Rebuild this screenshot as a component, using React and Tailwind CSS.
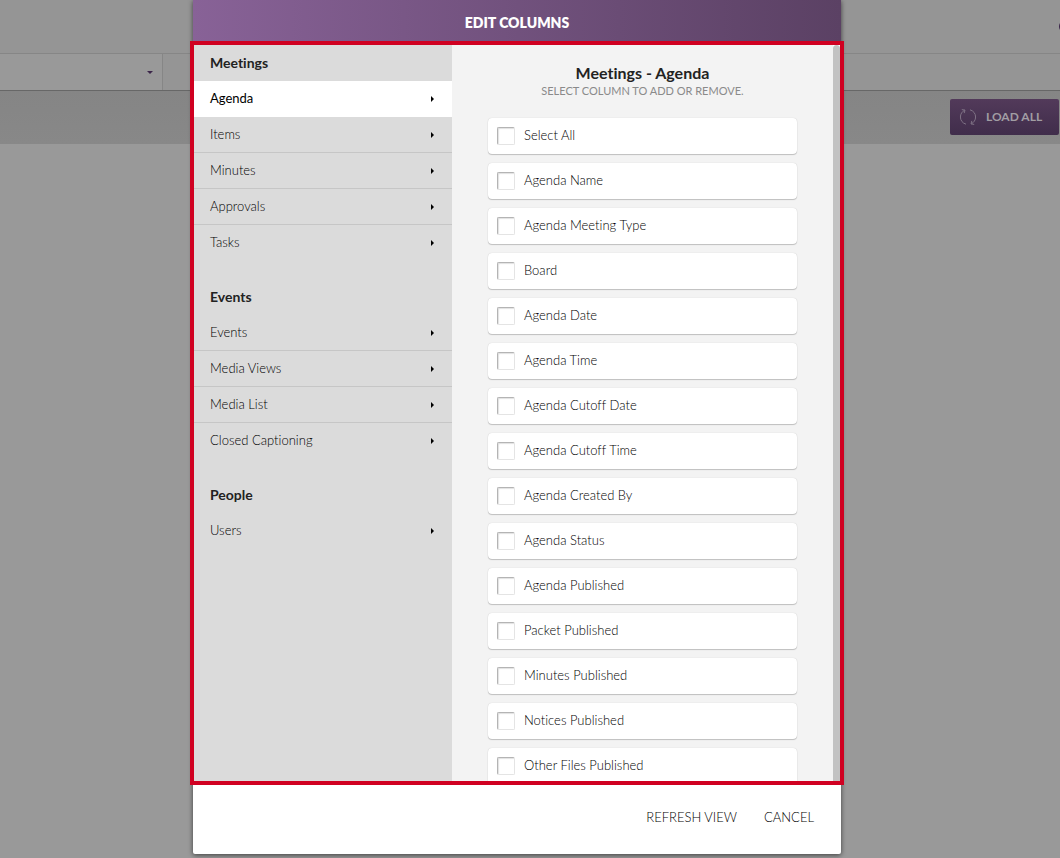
import React, { useState } from 'react';

const sections = [
  { title: 'Meetings', items: ['Agenda', 'Items', 'Minutes', 'Approvals', 'Tasks'] },
  { title: 'Events', items: ['Events', 'Media Views', 'Media List', 'Closed Captioning'] },
  { title: 'People', items: ['Users'] },
];

const columns = [
  'Select All',
  'Agenda Name',
  'Agenda Meeting Type',
  'Board',
  'Agenda Date',
  'Agenda Time',
  'Agenda Cutoff Date',
  'Agenda Cutoff Time',
  'Agenda Created By',
  'Agenda Status',
  'Agenda Published',
  'Packet Published',
  'Minutes Published',
  'Notices Published',
  'Other Files Published',
];

function ReloadIcon() {
  return (
    <svg width="18" height="18" viewBox="0 0 18 18" fill="none" stroke="currentColor" strokeWidth="1" aria-hidden="true">
      <path d="M7 16.2C3.5 15.2 1.4 12.3 1.4 9c0-3 1.700-5.500 4.300-6.800" />
      <path d="M2.800 1.600l3.200.5-.8 3" />
      <path d="M11 1.800C14.500 2.800 16.600 5.700 16.600 9c0 3-1.700 5.500-4.300 6.800" />
      <path d="M15.200 16.400l-3.200-.5.800-3" />
    </svg>
  );
}

function Backdrop() {
  return (
    <div className="min-h-screen bg-[#999999] overflow-hidden">
      <div className="flex h-[54px] items-center justify-end border-b border-[#868686] bg-[#959595]">
        <span className="-mr-3 size-[13px] rounded-full bg-[#3b2549]" />
      </div>
      <div className="flex h-[37px] border-b border-[#676767] bg-[#959595]">
        <button type="button" aria-label="Views" className="flex w-[163px] items-center justify-end border-r border-[#868686] bg-[#999999] pr-[9px]">
          <svg width="6" height="3" viewBox="0 0 6 3" aria-hidden="true">
            <path d="M0 0h6L3 3z" fill="#3b2549" />
          </svg>
        </button>
      </div>
      <div className="flex h-[53px] items-center justify-end bg-linear-to-b from-[#858585] to-[#888888] pr-px pb-px">
        <button
          type="button"
          className="flex h-9 w-[109px] items-center gap-[9px] rounded-xs bg-linear-to-b from-[#523a5a] to-[#402d4b] pl-[9px] text-xs font-bold text-[#a19da3]"
        >
          <span className="text-[#7f7285]"><ReloadIcon /></span>
          LOAD ALL
        </button>
      </div>
    </div>
  );
}

function Sidebar({ active, onSelect }) {
  return (
    <nav className="flex w-[258px] shrink-0 flex-col gap-[18px] bg-[#dbdbdb]">
      {sections.map((section) => (
        <div key={section.title}>
          <h3 className="flex h-9 items-center px-4 text-sm font-bold text-[#222222]">{section.title}</h3>
          <ul>
            {section.items.map((item) => {
              const id = `${section.title} - ${item}`;
              const isActive = active === id;
              return (
                <li key={id} className="group h-9">
                  <button
                    type="button"
                    onClick={() => onSelect(id)}
                    className={`flex h-full w-full items-center justify-between border-b pl-4 pr-[18px] text-left text-[13px] text-black group-last:border-transparent ${isActive ? 'border-white bg-white' : 'border-[#c6c6c6] font-light'}`}
                  >
                    {item}
                    <svg width="3" height="6" viewBox="0 0 3 6" aria-hidden="true">
                      <path d="M0 0v6l3-3z" fill="#000000" />
                    </svg>
                  </button>
                </li>
              );
            })}
          </ul>
        </div>
      ))}
    </nav>
  );
}

function ColumnOption({ label }) {
  return (
    <label className="flex h-9 shrink-0 items-center gap-[9px] rounded-sm bg-white px-[9px] text-[13px] font-light text-black shadow-[0_1px_1px_rgba(0,0,0,0.2),0_0_1px_rgba(0,0,0,0.2)]">
      <input
        type="checkbox"
        className="size-[18px] appearance-none rounded-xs border border-[#e4e4e4] border-t-[#b4b4b4] border-l-[#b4b4b4] bg-white shadow-[inset_1px_1px_1px_rgba(0,0,0,0.12)] checked:bg-[#7a5689]"
      />
      {label}
    </label>
  );
}

export default function App() {
  const [active, setActive] = useState('Meetings - Agenda');

  return (
    <div className="relative font-[Lato,sans-serif] [font-variant-ligatures:none]">
      <Backdrop />
      <div className="absolute inset-0 flex justify-center pr-[26px] pb-1">
        <div role="dialog" aria-labelledby="dialog-title" className="flex w-full max-w-[648px] flex-col rounded-b-xs bg-white shadow-[0_1px_5px_rgba(0,0,0,0.6)]">
          <header className="flex h-[41px] shrink-0 items-center justify-center bg-linear-to-r from-[#886297] to-[#5b4164] pt-1">
            <h1 id="dialog-title" className="text-sm font-extrabold text-white">EDIT COLUMNS</h1>
          </header>

          <div className="-mx-[3px] flex min-h-0 flex-1 border-4 border-[#d00021]">
            <Sidebar active={active} onSelect={setActive} />
            <main className="flex min-w-0 flex-1 flex-col overflow-hidden bg-[#f3f3f3] px-9 pt-[18px]">
              <div className="mb-[19px] text-center">
                <h2 className="text-base leading-5 font-bold text-[#222222]">{active}</h2>
                <p className="text-[11px] leading-4 text-[#8a8a8a]">SELECT COLUMN TO ADD OR REMOVE.</p>
              </div>
              <div className="flex min-h-0 flex-1 flex-col gap-[9px]">
                {columns.map((column) => (
                  <ColumnOption key={column} label={column} />
                ))}
              </div>
            </main>
            <div className="w-[7px] shrink-0 rounded-t-sm bg-[#c2c2c2]" />
          </div>

          <footer className="flex h-[69px] shrink-0 items-center justify-end gap-[27px] pr-[27px] pb-1 text-[13px] font-light text-black">
            <button type="button">REFRESH VIEW</button>
            <button type="button">CANCEL</button>
          </footer>
        </div>
      </div>
    </div>
  );
}
